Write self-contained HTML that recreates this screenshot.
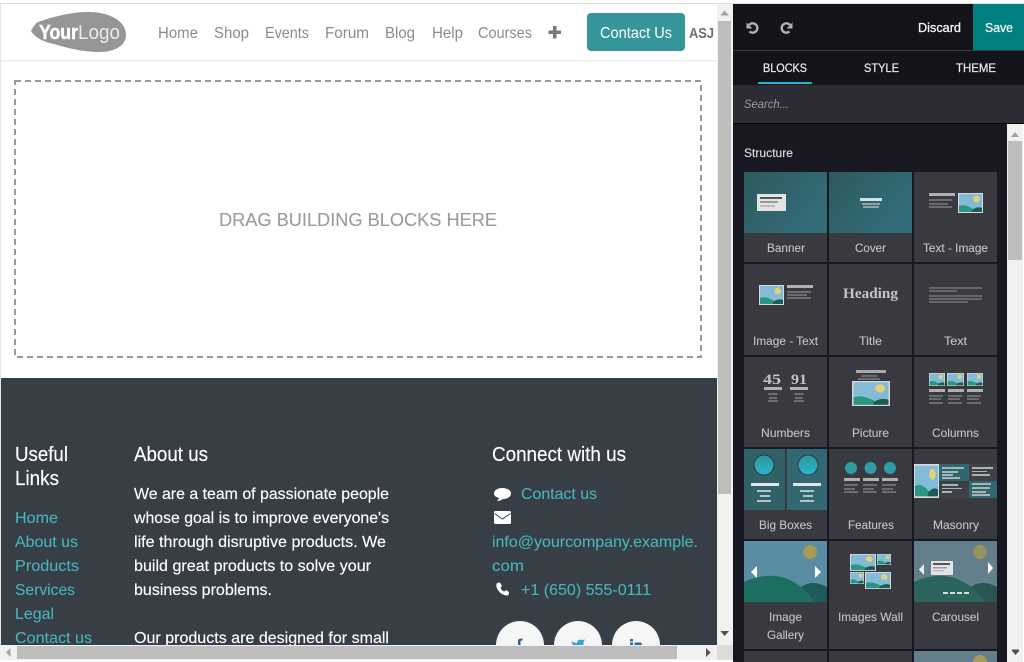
<!DOCTYPE html>
<html lang="en"><head><meta charset="utf-8"><title>Website editor</title>
<style>
html,body{margin:0;padding:0;width:1024px;height:662px;overflow:hidden;background:#fff}
svg{display:block;font-family:"Liberation Sans",sans-serif}
.nav{font-size:16px;fill:#8b8b8b}
.ft{font-size:16px;fill:#fff;stroke:#fff;stroke-width:.15px}
.ln{font-size:16px;fill:#45b3bd;stroke:#45b3bd;stroke-width:.1px}
.h{font-size:20px;fill:#fff;stroke:#fff;stroke-width:.15px}
.lb{font-size:12px;fill:#c4c4c6;stroke:#c4c4c6;stroke-width:.1px}
.tb{font-size:12px;fill:#e8e8ea;stroke:#e8e8ea;stroke-width:.25px}
.se{font-family:"Liberation Serif",serif;font-weight:bold;fill:#c4c4c4}
</style></head><body>
<svg width="1024" height="662" viewBox="0 0 1024 662" xmlns="http://www.w3.org/2000/svg">
<defs>
<linearGradient id="teal" x1="0" y1="0" x2="1" y2="0.6"><stop offset="0" stop-color="#2c5a5c"/><stop offset="1" stop-color="#346c7a"/></linearGradient>
<linearGradient id="circ" x1="0" y1="0" x2="0" y2="1"><stop offset="0" stop-color="#2f9499"/><stop offset="1" stop-color="#2ab5cc"/></linearGradient>
<symbol id="pic" viewBox="0 0 25 20" preserveAspectRatio="none">
<rect width="25" height="20" fill="#d8d8d8"/><rect x="1" y="1" width="23" height="18" fill="#82bbd6"/>
<circle cx="18.500" cy="6" r="3.300" fill="#e4d07c"/>
<path d="M1 13Q8 10 19 19H1Z" fill="#2a9580"/><path d="M14 17Q19 13 24 15V19H14Z" fill="#1d5a58"/>
</symbol>
<clipPath id="pageclip"><rect x="0" y="0" width="717" height="645"/></clipPath>
<clipPath id="r5"><rect x="744" y="541" width="83" height="61"/></clipPath>
<clipPath id="r5c"><rect x="914" y="541" width="83" height="61"/></clipPath>
<clipPath id="r6c"><rect x="914" y="651" width="83" height="11"/></clipPath>
</defs>

<rect width="1024" height="662" fill="#fff"/>
<rect x="0" y="3" width="1024" height="1" fill="#dcdcdc"/>

<g clip-path="url(#pageclip)">
<rect x="1" y="60" width="716" height="1" fill="#eeeeee"/>
<rect x="1" y="61" width="716" height="1" fill="#f7f7f7"/>
<path d="M31 31C33 27 36 23 38 22C55 16 72 12 88 12C110 12 126 21 126 35C126 46 114 52 100 52C80 52 65 47 50 43C41 41 34 36 31 31Z" fill="#969696"/>
<text x="39" y="39" font-size="20" font-weight="bold" fill="#fff" stroke="#fff" stroke-width=".5" textLength="39" lengthAdjust="spacingAndGlyphs">Your</text>
<text x="78" y="39" font-size="20" fill="#fff" fill-opacity=".8" textLength="42" lengthAdjust="spacingAndGlyphs">Logo</text>

<text class="nav" x="158" y="38" textLength="40" lengthAdjust="spacingAndGlyphs">Home</text>
<text class="nav" x="214" y="38" textLength="35" lengthAdjust="spacingAndGlyphs">Shop</text>
<text class="nav" x="265" y="38" textLength="44" lengthAdjust="spacingAndGlyphs">Events</text>
<text class="nav" x="325" y="38" textLength="44" lengthAdjust="spacingAndGlyphs">Forum</text>
<text class="nav" x="385" y="38" textLength="30" lengthAdjust="spacingAndGlyphs">Blog</text>
<text class="nav" x="432" y="38" textLength="31" lengthAdjust="spacingAndGlyphs">Help</text>
<text class="nav" x="478" y="38" textLength="54" lengthAdjust="spacingAndGlyphs">Courses</text>
<path d="M553 26h3.500v4.500h4.500v3.500h-4.500v4.500h-3.500v-4.500h-4.500v-3.500h4.500z" fill="#7d7873"/>
<rect x="587" y="13" width="98" height="38" rx="4" fill="#34969b"/>
<text x="600" y="38" font-size="16" fill="#fff" textLength="72" lengthAdjust="spacingAndGlyphs">Contact Us</text>
<text x="689" y="38" font-size="14.500" font-weight="bold" fill="#6f6f6f" textLength="25" lengthAdjust="spacingAndGlyphs">ASJ</text>

<rect x="15" y="81" width="686" height="276" fill="none" stroke="#999" stroke-width="2" stroke-dasharray="6 4"/>
<text x="219" y="226" font-size="18" fill="#9b9b9b" stroke="#9b9b9b" stroke-width=".1" textLength="278" lengthAdjust="spacingAndGlyphs">DRAG BUILDING BLOCKS HERE</text>

<rect x="1" y="378" width="716" height="267" fill="#383e45"/>
<text class="h" x="15" y="461" textLength="53" lengthAdjust="spacingAndGlyphs">Useful</text>
<text class="h" x="15" y="485" textLength="44" lengthAdjust="spacingAndGlyphs">Links</text>
<text class="h" x="134" y="461" textLength="74" lengthAdjust="spacingAndGlyphs">About us</text>
<text class="h" x="492" y="461" textLength="134" lengthAdjust="spacingAndGlyphs">Connect with us</text>

<text class="ln" x="15" y="523" textLength="43" lengthAdjust="spacingAndGlyphs">Home</text>
<text class="ln" x="15" y="547" textLength="63" lengthAdjust="spacingAndGlyphs">About us</text>
<text class="ln" x="15" y="571" textLength="64" lengthAdjust="spacingAndGlyphs">Products</text>
<text class="ln" x="15" y="595" textLength="60" lengthAdjust="spacingAndGlyphs">Services</text>
<text class="ln" x="15" y="619" textLength="39" lengthAdjust="spacingAndGlyphs">Legal</text>
<text class="ln" x="15" y="643" textLength="77" lengthAdjust="spacingAndGlyphs">Contact us</text>

<text class="ft" x="134" y="499" textLength="255" lengthAdjust="spacingAndGlyphs">We are a team of passionate people</text>
<text class="ft" x="134" y="523" textLength="255" lengthAdjust="spacingAndGlyphs">whose goal is to improve everyone's</text>
<text class="ft" x="134" y="547" textLength="252" lengthAdjust="spacingAndGlyphs">life through disruptive products. We</text>
<text class="ft" x="134" y="571" textLength="237" lengthAdjust="spacingAndGlyphs">build great products to solve your</text>
<text class="ft" x="134" y="595" textLength="138" lengthAdjust="spacingAndGlyphs">business problems.</text>
<text class="ft" x="134" y="643" textLength="255" lengthAdjust="spacingAndGlyphs">Our products are designed for small</text>

<path d="M502 488C507 488 511 490 511 493.500C511 497 507 499 503 499C502 500 499 501 497 501C498 500 499 499 499 498C496 497 494 496 494 493.500C494 490 498 488 502 488Z" fill="#fff"/>
<text class="ln" x="521" y="499" textLength="76" lengthAdjust="spacingAndGlyphs">Contact us</text>
<rect x="494" y="511" width="17" height="13" rx="1.500" fill="#fff"/>
<path d="M494.500 513.500L502.500 519L510.500 513.500" fill="none" stroke="#383e45" stroke-width="1"/>
<text class="ln" x="492" y="547" textLength="206" lengthAdjust="spacingAndGlyphs">info@yourcompany.example.</text>
<text class="ln" x="492" y="571" textLength="32" lengthAdjust="spacingAndGlyphs">com</text>
<path d="M497 583L500 582.500L502 586L500.500 587.500C501 589.500 502.500 591 504.500 591.500L506 590L509 592L508.500 595C507 596 505 595.500 502 594C499.500 592.500 497.500 590 496.500 587C496 585.500 496.500 584 497 583Z" fill="#fff"/>
<text class="ln" x="521" y="595" textLength="130" lengthAdjust="spacingAndGlyphs">+1 (650) 555-0111</text>

<circle cx="520" cy="645" r="24" fill="#f6f6f6"/>
<circle cx="578" cy="645" r="24" fill="#f6f6f6"/>
<circle cx="636" cy="645" r="24" fill="#f6f6f6"/>
<path d="M518 645V641C518 639 519.500 638.500 522.500 638.500V640.500C521 640.500 520.500 640.500 520.500 642V645Z" fill="#3b5998"/>
<path d="M571 641C574 643 577 643 577 643C577 640 580 639 582 640L585 639.500L583.500 642V645H573Z" fill="#2fa5dc"/>
<rect x="630" y="639" width="3" height="2.500" fill="#2a6fa8"/><rect x="630" y="642.500" width="3" height="3" fill="#2a6fa8"/><path d="M634.500 645V642.500H640C641.500 642.500 642 643.500 642 645Z" fill="#2a6fa8"/>
</g>

<rect x="0" y="4" width="1" height="641" fill="#e6e6e6"/>

<!-- page scrollbars -->
<rect x="717" y="4" width="16" height="641" fill="#f1f1f1"/>
<path d="M720.500 15.500L724.500 10.500L729 15.500Z" fill="#a3a3a3"/>
<rect x="718" y="21" width="13" height="473" fill="#bebebe"/>
<path d="M720.500 631L724.500 636L729 631Z" fill="#505050"/>
<rect x="0" y="645" width="717" height="15" fill="#f1f1f1"/>
<rect x="17" y="646" width="660" height="13" fill="#bebebe"/>
<path d="M10.500 648L6 652.500L10.500 657Z" fill="#a3a3a3"/>
<path d="M706 648L710.500 652.500L706 657Z" fill="#505050"/>
<rect x="717" y="645" width="16" height="15" fill="#dcdcdc"/>
<rect x="0" y="660" width="733" height="2" fill="#fff"/>

<!-- editor panel -->
<rect x="733" y="4" width="274" height="658" fill="#171822"/>
<rect x="733" y="4" width="291" height="46" fill="#14131a"/>
<rect x="733" y="50" width="291" height="1" fill="#3a3a40"/>
<rect x="733" y="51" width="291" height="34" fill="#14131a"/>
<rect x="733" y="85" width="291" height="38" fill="#2b2c34"/>
<rect x="733" y="123" width="291" height="1" fill="#050507"/>
<rect x="973" y="4" width="51" height="46" fill="#018081"/>
<path d="M746.500 22.500V28.500H752.500Z" fill="#b0b0b0"/>
<path d="M749 25A4.700 4.700 0 1 1 749.500 31.500" fill="none" stroke="#b0b0b0" stroke-width="2.400"/>
<path d="M792.500 22.500V28.500H786.500Z" fill="#b0b0b0"/>
<path d="M790 25A4.700 4.700 0 1 0 789.500 31.500" fill="none" stroke="#b0b0b0" stroke-width="2.400"/>
<text x="918" y="32" font-size="13" fill="#f4f4f4" stroke="#f4f4f4" stroke-width=".3" textLength="43" lengthAdjust="spacingAndGlyphs">Discard</text>
<text x="985" y="32" font-size="13" fill="#f4f4f4" stroke="#f4f4f4" stroke-width=".3" textLength="28" lengthAdjust="spacingAndGlyphs">Save</text>
<text class="tb" x="763" y="72" textLength="44" lengthAdjust="spacingAndGlyphs">BLOCKS</text>
<rect x="758" y="82" width="54" height="2" fill="#22b3d2"/>
<text class="tb" x="864" y="72" textLength="35" lengthAdjust="spacingAndGlyphs">STYLE</text>
<text class="tb" x="956" y="72" textLength="40" lengthAdjust="spacingAndGlyphs">THEME</text>
<text x="744" y="108" font-size="12" font-style="italic" fill="#9a9a9e" textLength="45" lengthAdjust="spacingAndGlyphs">Search...</text>
<text x="744" y="157" font-size="12" fill="#dedee0" stroke="#dedee0" stroke-width=".15" textLength="49" lengthAdjust="spacingAndGlyphs">Structure</text>

<!-- panel scrollbar -->
<rect x="1007" y="124" width="16" height="538" fill="#f1f1f1"/>
<path d="M1011 137L1015 132L1019 137Z" fill="#a3a3a3"/>
<rect x="1008" y="141" width="14" height="119" fill="#bebebe"/>
<path d="M1012 651L1015.500 655L1019 651Z" fill="#505050"/><rect x="1012" y="649.500" width="7" height="1.500" fill="#505050"/>

<!-- tiles -->
<g fill="#393940">
<rect x="744" y="172" width="83" height="90"/><rect x="829" y="172" width="83" height="90"/><rect x="914" y="172" width="83" height="90"/>
<rect x="744" y="264" width="83" height="91"/><rect x="829" y="264" width="83" height="91"/><rect x="914" y="264" width="83" height="91"/>
<rect x="744" y="357" width="83" height="90"/><rect x="829" y="357" width="83" height="90"/><rect x="914" y="357" width="83" height="90"/>
<rect x="744" y="449" width="83" height="90"/><rect x="829" y="449" width="83" height="90"/><rect x="914" y="449" width="83" height="90"/>
<rect x="744" y="541" width="83" height="108"/><rect x="829" y="541" width="83" height="108"/><rect x="914" y="541" width="83" height="108"/>
<rect x="744" y="651" width="83" height="11"/><rect x="829" y="651" width="83" height="11"/><rect x="914" y="651" width="83" height="11"/>
</g>

<!-- Banner -->
<rect x="744" y="172" width="83" height="61" fill="url(#teal)"/>
<rect x="757" y="194" width="29" height="17" fill="#e4e4e4"/>
<rect x="760" y="197" width="22" height="2" fill="#555"/><rect x="760" y="201" width="18" height="2" fill="#999"/><rect x="760" y="205" width="15" height="2" fill="#bbb"/>
<!-- Cover -->
<rect x="829" y="172" width="83" height="61" fill="url(#teal)"/>
<rect x="860" y="198" width="22" height="3" fill="#d8dfe2"/><rect x="862" y="203" width="18" height="2" fill="#8da3aa"/><rect x="863" y="206" width="16" height="2" fill="#8da3aa"/>
<!-- Text-Image -->
<rect x="929" y="193" width="26" height="3" fill="#b0b0b0"/>
<g fill="#6b6b70"><rect x="929" y="199" width="23" height="2"/><rect x="929" y="203" width="19" height="2"/><rect x="929" y="206" width="23" height="2"/></g>
<use href="#pic" x="958" y="193" width="25" height="20"/>
<!-- Image-Text -->
<use href="#pic" x="759" y="285" width="25" height="20"/>
<rect x="787" y="285" width="26" height="3" fill="#b0b0b0"/>
<g fill="#6b6b70"><rect x="787" y="291" width="24" height="2"/><rect x="787" y="294" width="20" height="2"/><rect x="787" y="297" width="24" height="2"/></g>
<!-- Title -->
<text class="se" x="843" y="298" font-size="15" textLength="55" lengthAdjust="spacingAndGlyphs">Heading</text>
<!-- Text -->
<g fill="#66666b"><rect x="929" y="287" width="53" height="2"/><rect x="929" y="290" width="28" height="2"/><rect x="929" y="295" width="53" height="2"/><rect x="929" y="298" width="53" height="2"/><rect x="929" y="301" width="39" height="2"/></g>
<!-- Numbers -->
<text class="se" x="763" y="384" font-size="15" textLength="18" lengthAdjust="spacingAndGlyphs">45</text>
<text class="se" x="791" y="384" font-size="15" textLength="16" lengthAdjust="spacingAndGlyphs">91</text>
<g fill="#b0b0b0"><rect x="764" y="387" width="18" height="3"/><rect x="790" y="387" width="18" height="3"/></g>
<g fill="#6b6b70"><rect x="768" y="393" width="10" height="2"/><rect x="769" y="397" width="8" height="2"/><rect x="768" y="400" width="10" height="2"/><rect x="794" y="393" width="10" height="2"/><rect x="795" y="397" width="8" height="2"/><rect x="794" y="400" width="10" height="2"/></g>
<!-- Picture -->
<rect x="856" y="370" width="30" height="3" fill="#a8a8a8"/><rect x="861" y="375" width="16" height="2" fill="#6b6b70"/><rect x="858" y="378" width="22" height="2" fill="#6b6b70"/>
<use href="#pic" x="852" y="381" width="38" height="25"/>
<!-- Columns -->
<use href="#pic" x="929" y="373" width="16" height="13"/><use href="#pic" x="947" y="373" width="17" height="13"/><use href="#pic" x="967" y="373" width="16" height="13"/>
<g fill="#b0b0b0"><rect x="929" y="389" width="16" height="3"/><rect x="948" y="389" width="16" height="3"/><rect x="967" y="389" width="16" height="3"/></g>
<g fill="#6b6b70"><rect x="929" y="395" width="14" height="2"/><rect x="929" y="398" width="12" height="2"/><rect x="929" y="402" width="14" height="2"/><rect x="948" y="395" width="14" height="2"/><rect x="948" y="398" width="12" height="2"/><rect x="948" y="402" width="14" height="2"/><rect x="967" y="395" width="14" height="2"/><rect x="967" y="398" width="12" height="2"/><rect x="967" y="402" width="14" height="2"/></g>
<!-- Big Boxes -->
<rect x="744" y="449" width="41" height="61" fill="#2f6166"/><rect x="787" y="449" width="40" height="61" fill="#336872"/>
<circle cx="764" cy="465" r="10" fill="url(#circ)" stroke="#26393f" stroke-width="1"/><circle cx="808" cy="465" r="10" fill="url(#circ)" stroke="#26393f" stroke-width="1"/>
<g fill="#e4e6e6"><rect x="751" y="483" width="28" height="3"/><rect x="793" y="483" width="28" height="3"/></g>
<g fill="#b3c3c6"><rect x="757" y="490" width="14" height="2"/><rect x="760" y="495" width="10" height="2"/><rect x="757" y="500" width="14" height="2"/><rect x="800" y="490" width="14" height="2"/><rect x="803" y="495" width="10" height="2"/><rect x="800" y="500" width="14" height="2"/></g>
<!-- Features -->
<circle cx="851" cy="468" r="6" fill="#2f9ca5"/><circle cx="870.500" cy="468" r="6" fill="#2f9ca5"/><circle cx="890" cy="468" r="6" fill="#2f9ca5"/>
<g fill="#b0b0b0"><rect x="844" y="478" width="16" height="3"/><rect x="863" y="478" width="16" height="3"/><rect x="882" y="478" width="16" height="3"/></g>
<g fill="#6b6b70"><rect x="844" y="484" width="14" height="2"/><rect x="844" y="488" width="11" height="2"/><rect x="844" y="491" width="14" height="2"/><rect x="863" y="484" width="14" height="2"/><rect x="863" y="488" width="11" height="2"/><rect x="863" y="491" width="14" height="2"/><rect x="882" y="484" width="14" height="2"/><rect x="882" y="488" width="11" height="2"/><rect x="882" y="491" width="14" height="2"/></g>
<!-- Masonry -->
<use href="#pic" x="914" y="464" width="25" height="34"/>
<rect x="939" y="464" width="30" height="17" fill="#2f6670"/><rect x="969" y="464" width="28" height="17" fill="#404047"/>
<rect x="939" y="482" width="30" height="16" fill="#404047"/><rect x="969" y="481" width="28" height="17" fill="#2f6670"/>
<g fill="#aab4b6"><rect x="942" y="467" width="22" height="2"/><rect x="942" y="471" width="16" height="2"/><rect x="942" y="474" width="11" height="2"/><rect x="942" y="477" width="18" height="2"/><rect x="972" y="467" width="21" height="2"/><rect x="972" y="471" width="15" height="1"/><rect x="972" y="474" width="18" height="2"/><rect x="942" y="484" width="16" height="2"/><rect x="942" y="488" width="20" height="1"/><rect x="942" y="491" width="10" height="2"/><rect x="972" y="483" width="19" height="2"/><rect x="972" y="487" width="18" height="2"/><rect x="972" y="491" width="14" height="2"/><rect x="972" y="494" width="18" height="2"/></g>
<!-- Image Gallery -->
<g clip-path="url(#r5)">
<rect x="744" y="541" width="83" height="61" fill="#5a8da3"/>
<circle cx="810" cy="552" r="7" fill="#a69a58"/>
<path d="M788 602Q798 584 812 583Q820 583 827 587V602Z" fill="#1d5a58"/>
<path d="M744 582Q765 572 785 578Q802 584 815 602H744Z" fill="#1c6e60"/>
<path d="M757 566L751 572L757 578Z" fill="#fff"/><path d="M815 566L821 572L815 578Z" fill="#fff"/>
</g>
<!-- Images Wall -->
<use href="#pic" x="850" y="554" width="26" height="17"/><use href="#pic" x="877" y="554" width="14" height="11"/>
<use href="#pic" x="850" y="572" width="14" height="12"/><use href="#pic" x="865" y="572" width="26" height="17"/>
<!-- Carousel -->
<g clip-path="url(#r5c)">
<rect x="914" y="541" width="83" height="61" fill="#637f8c"/>
<circle cx="980" cy="552" r="7" fill="#97905f"/>
<path d="M958 602Q968 584 982 583Q990 583 997 587V602Z" fill="#2a5555"/>
<path d="M914 582Q935 572 955 578Q972 584 985 602H914Z" fill="#2a645c"/>
<rect x="931" y="561" width="22" height="14" fill="#e4e4e4"/>
<rect x="933" y="563" width="17" height="2" fill="#555"/><rect x="933" y="567" width="14" height="1.500" fill="#999"/><rect x="933" y="570" width="11" height="1.500" fill="#bbb"/>
<path d="M924 564L919 569.500L924 575Z" fill="#eee"/><path d="M988 562L993 568L988 574Z" fill="#fff"/>
<g fill="#d5dadc"><rect x="943" y="592" width="5" height="2"/><rect x="950" y="592" width="5" height="2"/><rect x="957" y="592" width="5" height="2"/><rect x="964" y="592" width="5" height="2"/></g>
</g>
<!-- row 6 right -->
<g clip-path="url(#r6c)">
<rect x="914" y="651" width="83" height="11" fill="#637f8c"/><circle cx="980" cy="662" r="7" fill="#a69a58"/>
</g>

<!-- labels -->
<text class="lb" x="767" y="252" textLength="38" lengthAdjust="spacingAndGlyphs">Banner</text>
<text class="lb" x="855" y="252" textLength="31" lengthAdjust="spacingAndGlyphs">Cover</text>
<text class="lb" x="923" y="252" textLength="65" lengthAdjust="spacingAndGlyphs">Text - Image</text>
<text class="lb" x="753" y="345" textLength="65" lengthAdjust="spacingAndGlyphs">Image - Text</text>
<text class="lb" x="859" y="345" textLength="23" lengthAdjust="spacingAndGlyphs">Title</text>
<text class="lb" x="944" y="345" textLength="23" lengthAdjust="spacingAndGlyphs">Text</text>
<text class="lb" x="761" y="437" textLength="49" lengthAdjust="spacingAndGlyphs">Numbers</text>
<text class="lb" x="852" y="437" textLength="37" lengthAdjust="spacingAndGlyphs">Picture</text>
<text class="lb" x="932" y="437" textLength="47" lengthAdjust="spacingAndGlyphs">Columns</text>
<text class="lb" x="759" y="529" textLength="53" lengthAdjust="spacingAndGlyphs">Big Boxes</text>
<text class="lb" x="848" y="529" textLength="46" lengthAdjust="spacingAndGlyphs">Features</text>
<text class="lb" x="933" y="529" textLength="46" lengthAdjust="spacingAndGlyphs">Masonry</text>
<text class="lb" x="769" y="621" textLength="33" lengthAdjust="spacingAndGlyphs">Image</text>
<text class="lb" x="767" y="639" textLength="37" lengthAdjust="spacingAndGlyphs">Gallery</text>
<text class="lb" x="838" y="621" textLength="65" lengthAdjust="spacingAndGlyphs">Images Wall</text>
<text class="lb" x="932" y="621" textLength="47" lengthAdjust="spacingAndGlyphs">Carousel</text>
</svg>
</body></html>
